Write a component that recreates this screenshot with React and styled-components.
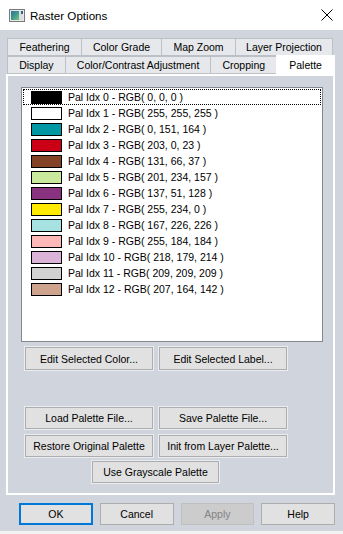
import React from "react";
import styled, { createGlobalStyle } from "styled-components";

const Global = createGlobalStyle`
  html, body { margin: 0; padding: 0; background: #ffffff; }
  body { font-family: "Liberation Sans", Arial, sans-serif; font-size: 10.5px; color: #000; }
  * { box-sizing: border-box; }
`;

const Window = styled.div`
  width: 343px;
  height: 534px;
  display: flex;
  flex-direction: column;
  background: #d0d5dd;
  overflow: hidden;
`;

const TitleBar = styled.div`
  height: 30px;
  flex: none;
  background: #ffffff;
  display: flex;
  align-items: center;
  padding: 0 9px 0 9px;
`;

const Title = styled.div`
  margin-left: 5px;
  font-size: 11.6px;
  color: #000;
  flex: 1;
`;

const Body = styled.div`
  flex: 1;
  display: flex;
  flex-direction: column;
  padding: 8px 8px 0 6px;
`;

const TabRows = styled.div`
  display: flex;
  flex-direction: column;
  padding-left: 1px;
`;

const TabRow = styled.div`
  display: flex;
  height: 18px;
  align-items: flex-end;
`;

const Tab = styled.div`
  width: ${(p) => p.$w}px;
  height: ${(p) => (p.$active ? 21 : 18)}px;
  margin-bottom: ${(p) => (p.$active ? -2 : 0)}px;
  margin-left: ${(p) => (p.$first ? 0 : -1)}px;
  background: ${(p) => (p.$active ? "#ffffff" : "#e6e8eb")};
  border: 1px solid ${(p) => (p.$active ? "#ffffff" : "#bcc0c7")};
  border-bottom: ${(p) => (p.$active ? "none" : "1px solid #bcc0c7")};
  display: flex;
  align-items: center;
  justify-content: center;
  padding-bottom: ${(p) => (p.$active ? 2 : 0)}px;
  position: relative;
  z-index: ${(p) => (p.$active ? 2 : 1)};
  white-space: nowrap;
  color: #000;
`;

const Panel = styled.div`
  height: 421px;
  border: 2px solid #ffffff;
  display: flex;
  flex-direction: column;
  padding: 11px 0 0 13px;
`;

const ListBox = styled.div`
  width: 302px;
  height: 255px;
  background: #ffffff;
  border: 1px solid #828790;
  padding: 1px 1px 0 1px;
  display: flex;
  flex-direction: column;
`;

const Row = styled.div`
  height: 16px;
  display: flex;
  align-items: center;
  padding-left: 7px;
  border: 1px ${(p) => (p.$focused ? "dotted #000" : "solid transparent")};
  white-space: nowrap;
`;

const Swatch = styled.div`
  width: 31px;
  height: 13px;
  border: 1px solid #000;
  background: ${(p) => p.$c};
  flex: none;
`;

const RowLabel = styled.span`
  margin-left: 6px;
  color: #000;
`;

const ButtonRow = styled.div`
  display: flex;
  gap: 6px;
  margin-top: ${(p) => p.$top}px;
  padding-left: ${(p) => p.$left}px;
`;

const Btn = styled.div`
  width: ${(p) => p.$w}px;
  height: ${(p) => p.$h}px;
  background: ${(p) => (p.$disabled ? "#cccccc" : "#e1e1e1")};
  border: ${(p) => (p.$default ? "2px solid #0078d7" : p.$disabled ? "1px solid #bfbfbf" : "1px solid #adadad")};
  color: ${(p) => (p.$disabled ? "#838383" : "#000")};
  box-shadow: ${(p) => (p.$outline ? "0 0 0 1px #e9ecf0" : "none")};
  display: flex;
  align-items: center;
  justify-content: center;
  white-space: nowrap;
`;

const Footer = styled.div`
  display: flex;
  gap: 7px;
  margin-top: 8px;
  padding-left: 13px;
`;

const BottomEdge = styled.div`
  margin-top: auto;
  height: 3px;
  background: #f2f2f2;
  margin-left: -6px;
  margin-right: -8px;
`;

const colors = [
  [0, 0, 0],
  [255, 255, 255],
  [0, 151, 164],
  [203, 0, 23],
  [131, 66, 37],
  [201, 234, 157],
  [137, 51, 128],
  [255, 234, 0],
  [167, 226, 226],
  [255, 184, 184],
  [218, 179, 214],
  [209, 209, 209],
  [207, 164, 142],
];

const row1 = [
  ["Feathering", 75],
  ["Color Grade", 81],
  ["Map Zoom", 75],
  ["Layer Projection", 98],
];
const row2 = [
  ["Display", 59],
  ["Color/Contrast Adjustment", 147],
  ["Cropping", 67],
  ["Palette", 59, true],
];

function AppIcon() {
  return (
    <svg width="16" height="13" viewBox="0 0 16 13">
      <defs>
        <linearGradient id="g1" x1="0" y1="0" x2="1" y2="1">
          <stop offset="0" stopColor="#2e6f9e" />
          <stop offset="0.5" stopColor="#3f9a8a" />
          <stop offset="1" stopColor="#7cc07a" />
        </linearGradient>
      </defs>
      <rect x="0.5" y="0.5" width="15" height="12" fill="#e8e8e8" stroke="#7a7a7a" />
      <rect x="2" y="2" width="8" height="9" fill="url(#g1)" />
      <rect x="10" y="2" width="4" height="9" fill="#d8dde3" />
      <rect x="12" y="2" width="2" height="3" fill="#3c5f8c" />
    </svg>
  );
}

function CloseIcon() {
  return (
    <svg width="12" height="12" viewBox="0 0 12 12">
      <path d="M0.5 0.5 L11.5 11.5 M11.5 0.5 L0.5 11.5" stroke="#000" strokeWidth="1" fill="none" />
    </svg>
  );
}

export default function App() {
  return (
    <>
      <Global />
      <Window>
        <TitleBar>
          <AppIcon />
          <Title>Raster Options</Title>
          <span style={{ marginRight: 1, display: "flex" }}>
            <CloseIcon />
          </span>
        </TitleBar>
        <Body>
          <TabRows>
            <TabRow>
              {row1.map(([t, w], i) => (
                <Tab key={t} $w={w} $first={i === 0}>
                  {t}
                </Tab>
              ))}
            </TabRow>
            <TabRow>
              {row2.map(([t, w, a], i) => (
                <Tab key={t} $w={w} $first={i === 0} $active={!!a}>
                  {t}
                </Tab>
              ))}
            </TabRow>
          </TabRows>
          <Panel>
            <ListBox>
              {colors.map((c, i) => (
                <Row key={i} $focused={i === 0}>
                  <Swatch $c={`rgb(${c[0]},${c[1]},${c[2]})`} />
                  <RowLabel>{`Pal Idx ${i} - RGB( ${c[0]}, ${c[1]}, ${c[2]} )`}</RowLabel>
                </Row>
              ))}
            </ListBox>
            <ButtonRow $top={5} $left={4}>
              <Btn $w={128} $h={23} $outline>Edit Selected Color...</Btn>
              <Btn $w={128} $h={23} $outline>Edit Selected Label...</Btn>
            </ButtonRow>
            <ButtonRow $top={37} $left={4}>
              <Btn $w={128} $h={22} $outline>Load Palette File...</Btn>
              <Btn $w={128} $h={22} $outline>Save Palette File...</Btn>
            </ButtonRow>
            <ButtonRow $top={6} $left={4}>
              <Btn $w={128} $h={22} $outline>Restore Original Palette</Btn>
              <Btn $w={128} $h={22} $outline>Init from Layer Palette...</Btn>
            </ButtonRow>
            <ButtonRow $top={4} $left={71}>
              <Btn $w={127} $h={22} $outline>Use Grayscale Palette</Btn>
            </ButtonRow>
          </Panel>
          <Footer>
            <Btn $w={75} $h={22} $default>OK</Btn>
            <Btn $w={75} $h={22}>Cancel</Btn>
            <Btn $w={75} $h={22} $disabled>Apply</Btn>
            <Btn $w={75} $h={22}>Help</Btn>
          </Footer>
          <BottomEdge />
        </Body>
      </Window>
    </>
  );
}
